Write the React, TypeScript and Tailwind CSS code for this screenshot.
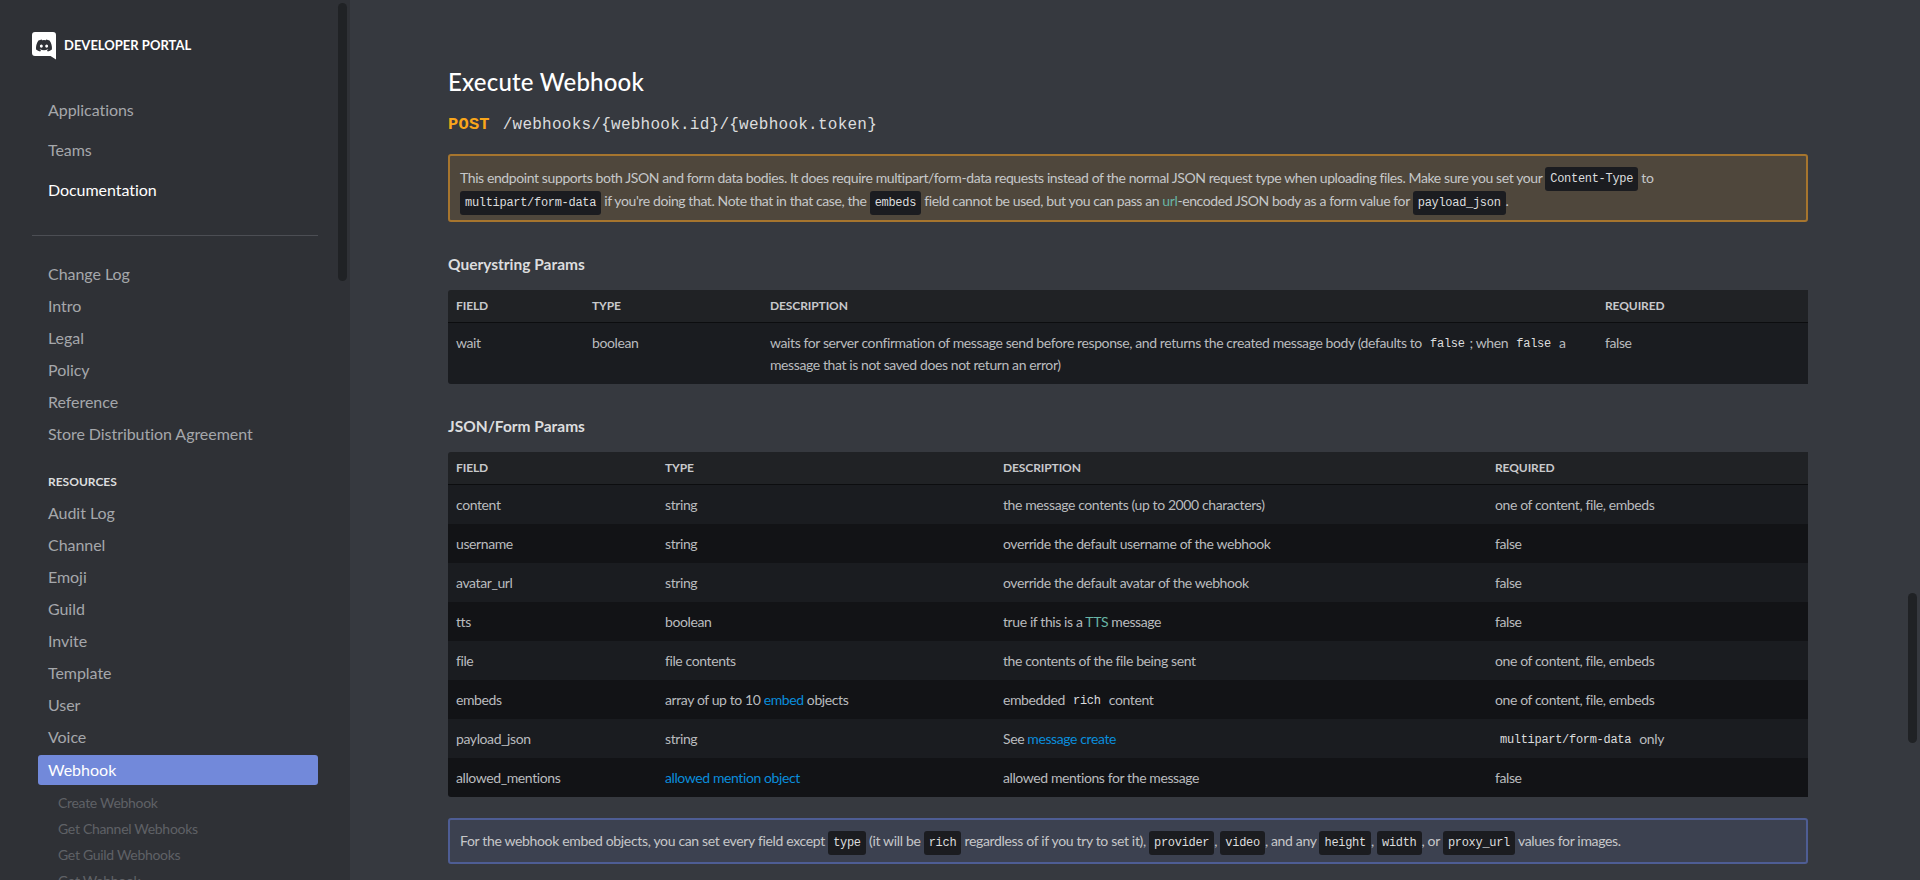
import React from 'react';

const Code: React.FC<{ children: React.ReactNode; plain?: boolean }> = ({ children, plain }) => (
  <code className={`inline-block font-['Liberation_Mono',monospace] text-[12px] leading-[20px] rounded-[3px] px-[5px] tracking-[-0.3px] text-[#dcddde] align-middle ${plain ? 'h-[20px] bg-transparent' : 'h-[24px] -my-[2px] py-[2px] bg-[#1b1c20]'}`}>
    {children}
  </code>
);

const A: React.FC<{ children: React.ReactNode }> = ({ children }) => <a className="text-[#0a8ddb]">{children}</a>;
const Tip: React.FC<{ children: React.ReactNode }> = ({ children }) => <span className="text-[#68b5a5]">{children}</span>;

const topNav = ['Applications', 'Teams', 'Documentation'];
const docs = ['Change Log', 'Intro', 'Legal', 'Policy', 'Reference', 'Store Distribution Agreement'];
const resources = ['Audit Log', 'Channel', 'Emoji', 'Guild', 'Invite', 'Template', 'User', 'Voice'];
const subs = ['Create Webhook', 'Get Channel Webhooks', 'Get Guild Webhooks', 'Get Webhook'];

const Sidebar: React.FC = () => (
  <aside className="relative w-[350px] shrink-0 h-[880px] overflow-hidden bg-[#2f3136] font-['Lato',sans-serif]">
    <div className="flex items-center gap-[8px] pl-[32px] pt-[32px] h-[60px]">
      <svg width="24" height="28" viewBox="0 0 24 28" aria-hidden="true" className="shrink-0">
        <path d="M3 0h18a3 3 0 0 1 3 3v24.500l-5.500-3.500H3a3 3 0 0 1-3-3V3a3 3 0 0 1 3-3z" fill="#fff" />
        <path transform="translate(4 5.500) scale(0.666)" fill="#2f3136" d="M20.317 4.37a19.791 19.791 0 0 0-4.885-1.515.074.074 0 0 0-.079.037c-.21.375-.444.864-.608 1.25a18.27 18.27 0 0 0-5.487 0 12.64 12.64 0 0 0-.617-1.25.077.077 0 0 0-.079-.037A19.736 19.736 0 0 0 3.677 4.37a.07.07 0 0 0-.032.027C.533 9.046-.32 13.58.099 18.057a.082.082 0 0 0 .031.057 19.9 19.9 0 0 0 5.993 3.03.078.078 0 0 0 .084-.028c.462-.63.874-1.295 1.226-1.994a.076.076 0 0 0-.041-.106 13.107 13.107 0 0 1-1.872-.892.077.077 0 0 1-.008-.128c.126-.094.252-.192.372-.292a.074.074 0 0 1 .077-.01c3.928 1.793 8.18 1.793 12.062 0a.074.074 0 0 1 .078.01c.12.098.246.198.373.292a.077.077 0 0 1-.006.127 12.299 12.299 0 0 1-1.873.892.077.077 0 0 0-.041.107c.36.698.772 1.362 1.225 1.993a.076.076 0 0 0 .084.028 19.839 19.839 0 0 0 6.002-3.03.077.077 0 0 0 .032-.054c.5-5.177-.838-9.674-3.549-13.66a.061.061 0 0 0-.031-.03zM8.02 15.33c-1.183 0-2.157-1.085-2.157-2.419 0-1.333.956-2.419 2.157-2.419 1.21 0 2.176 1.096 2.157 2.42 0 1.333-.956 2.418-2.157 2.418zm7.975 0c-1.183 0-2.157-1.085-2.157-2.419 0-1.333.955-2.419 2.157-2.419 1.21 0 2.176 1.096 2.157 2.42 0 1.333-.946 2.418-2.157 2.418z" />
      </svg>
      <span className="text-[13px] font-bold text-white -mt-[1px]">DEVELOPER PORTAL</span>
    </div>

    <nav className="pt-[30px] pl-[48px]">
      {topNav.map((item) => (
        <div key={item} className={`h-[40px] leading-[40px] text-[16px] tracking-[-0.05px] ${item === 'Documentation' ? 'text-white' : 'text-[#a5a7ab]'}`}>
          {item}
        </div>
      ))}
    </nav>

    <div className="mx-[32px] w-[286px] h-px bg-[#4c4e54] mt-[25px] mb-[22px]" />

    <nav className="pl-[48px]">
      {docs.map((item) => (
        <div key={item} className="h-[32px] leading-[32px] text-[16px] tracking-[-0.05px] text-[#a5a7ab]">{item}</div>
      ))}
    </nav>

    <div className="pl-[48px] mt-[16px] h-[31px] leading-[32px] text-[12px] font-bold text-[#dcddde]">RESOURCES</div>

    <nav className="pl-[48px]">
      {resources.map((item) => (
        <div key={item} className="h-[32px] leading-[32px] text-[16px] tracking-[-0.05px] text-[#a5a7ab]">{item}</div>
      ))}
    </nav>

    <div className="ml-[38px] w-[280px] h-[30px] mt-[2px] rounded-[3px] bg-[#7289da] pl-[10px] leading-[30px] text-[16px] text-white">Webhook</div>

    <ul className="pt-[5px] pl-[58px]">
      {subs.map((item) => (
        <li key={item} className="h-[26px] leading-[26px] text-[14px] tracking-[-0.3px] text-[#5f6166]">{item}</li>
      ))}
    </ul>

    {/* scroll thumb */}
    <div className="absolute left-[338px] top-[3px] w-[9px] h-[278px] rounded-[5px] bg-[#202225]" />
  </aside>
);

type Row = { cells: React.ReactNode[] };

const Th: React.FC<{ children: React.ReactNode }> = ({ children }) => (
  <th className="h-[33px] px-[8px] text-left text-[12px] tracking-[-0.1px] font-bold text-[#c8c9cc] border-b border-[#0c0d0f]">{children}</th>
);

const Table: React.FC<{ widths: string[]; rows: Row[]; tall?: boolean }> = ({ widths, rows, tall }) => (
  <div className="rounded-[3px] overflow-hidden">
    <table className="w-[1360px] table-fixed border-separate border-spacing-0 text-[14px] tracking-[-0.4px] text-[#b9bbbe]">
      <colgroup>
        {widths.map((w) => (
          <col key={w} className={w} />
        ))}
      </colgroup>
      <thead className="bg-[#202225]">
        <tr>
          <Th>FIELD</Th>
          <Th>TYPE</Th>
          <Th>DESCRIPTION</Th>
          <Th>REQUIRED</Th>
        </tr>
      </thead>
      <tbody>
        {rows.map((row, i) => (
          <tr key={i} className={i % 2 === 0 ? 'bg-[#1a1c20]' : 'bg-[#121316]'}>
            {row.cells.map((cell, j) => (
              <td key={j} className={tall ? 'px-[8px] pt-[9px] pb-[8px] align-top leading-[22px]' : 'h-[39px] px-[8px] align-middle leading-[22px]'}>
                {cell}
              </td>
            ))}
          </tr>
        ))}
      </tbody>
    </table>
  </div>
);

const queryRows: Row[] = [
  {
    cells: [
      'wait',
      'boolean',
      <>
        waits for server confirmation of message send before response, and returns the created message body (defaults to <Code plain>false</Code>; when <Code plain>false</Code> a message that is not saved does not return an error)
      </>,
      'false',
    ],
  },
];

const jsonRows: Row[] = [
  { cells: ['content', 'string', 'the message contents (up to 2000 characters)', 'one of content, file, embeds'] },
  { cells: ['username', 'string', 'override the default username of the webhook', 'false'] },
  { cells: ['avatar_url', 'string', 'override the default avatar of the webhook', 'false'] },
  { cells: ['tts', 'boolean', <>true if this is a <Tip>TTS</Tip> message</>, 'false'] },
  { cells: ['file', 'file contents', 'the contents of the file being sent', 'one of content, file, embeds'] },
  {
    cells: [
      'embeds',
      <>array of up to 10 <A>embed</A> objects</>,
      <>embedded <Code plain>rich</Code> content</>,
      'one of content, file, embeds',
    ],
  },
  {
    cells: [
      'payload_json',
      'string',
      <>See <A>message create</A></>,
      <><Code plain>multipart/form-data</Code> only</>,
    ],
  },
  { cells: ['allowed_mentions', <A>allowed mention object</A>, 'allowed mentions for the message', 'false'] },
];

const App: React.FC = () => (
  <div className="flex w-[1920px] h-[880px] overflow-hidden bg-[#36393f] font-['Lato',sans-serif]">
    <Sidebar />
    <main className="relative flex-1 h-[880px] overflow-hidden pl-[98px]">
      <h1 className="mt-[66px] h-[32px] leading-[32px] text-[24px] tracking-[0.2px] font-medium text-white">Execute Webhook</h1>
      <div className="mt-[11px] h-[32px] leading-[32px] font-['Liberation_Mono',monospace] text-[16px] tracking-[0.25px] text-[#dcddde]">
        <span className="font-bold text-[17px] text-[#faa61a]">POST</span> <span className="ml-[3px]">/webhooks/{'{webhook.id}'}/{'{webhook.token}'}</span>
      </div>

      <div className="mt-[13px] w-[1360px] h-[68px] box-border rounded-[3px] border-2 border-[#a6752e] bg-[#4f473c] px-[10px] pt-[10px] pb-[8px] text-[14px] tracking-[-0.4px] leading-[23px] text-[#c6c7c9]">
        This endpoint supports both JSON and form data bodies. It does require multipart/form-data requests instead of the normal JSON request type when uploading files. Make sure you set your <Code>Content-Type</Code> to <Code>multipart/form-data</Code> if you're doing that. Note that in that case, the <Code>embeds</Code> field cannot be used, but you can pass an <Tip>url</Tip>-encoded JSON body as a form value for <Code>payload_json</Code>.
      </div>

      <h3 className="mt-[32px] h-[20px] leading-[20px] text-[15.5px] font-bold text-[#dcddde]">Querystring Params</h3>
      <div className="mt-[16px]">
        <Table widths={['w-[136px]', 'w-[178px]', 'w-[835px]', 'w-[211px]']} rows={queryRows} tall />
      </div>

      <h3 className="mt-[32px] h-[20px] leading-[20px] text-[15.5px] font-bold text-[#dcddde]">JSON/Form Params</h3>
      <div className="mt-[16px]">
        <Table widths={['w-[209px]', 'w-[338px]', 'w-[492px]', 'w-[321px]']} rows={jsonRows} />
      </div>

      <div className="mt-[21px] w-[1360px] h-[46px] box-border rounded-[3px] border-2 border-[#4e5d94] bg-[#3c4150] px-[10px] text-[14px] tracking-[-0.34px] leading-[42px] text-[#c6c7c9]">
        For the webhook embed objects, you can set every field except <Code>type</Code> (it will be <Code>rich</Code> regardless of if you try to set it), <Code>provider</Code>, <Code>video</Code>, and any <Code>height</Code>, <Code>width</Code>, or <Code>proxy_url</Code> values for images.
      </div>

      {/* scroll thumb */}
      <div className="absolute right-[3px] top-[593px] w-[9px] h-[150px] rounded-[5px] bg-[#202225]" />
    </main>
  </div>
);

export default App;
